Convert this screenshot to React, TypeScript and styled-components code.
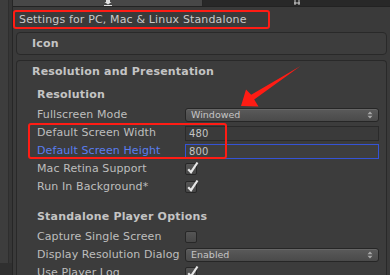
import React from 'react';
import styled, { createGlobalStyle, css } from 'styled-components';

const GlobalStyle = createGlobalStyle`
  html, body {
    margin: 0;
    padding: 0;
    background: #3a3a3a;
  }
  body {
    font-family: "DejaVu Sans", Verdana, sans-serif;
    overflow: hidden;
  }
`;

const Page = styled.div`
  position: relative;
  display: flex;
  width: 390px;
  height: 275px;
  overflow: hidden;
  background: #3a3a3a;
`;

const Rail = styled.div`
  flex: none;
  width: 12px;
  display: flex;
  flex-direction: column;
  border-right: 1px solid #262626;
`;

const RailBody = styled.div`
  height: 263px;
  display: flex;
`;

const RailLeft = styled.div`
  width: 8px;
  background: #3d3d3d;
  border-right: 1px solid #2e2e2e;
`;

const RailRight = styled.div`
  flex: 1;
  background: #363636;
`;

const RailFoot = styled.div`
  flex: 1;
  background: #303030;
`;

const Main = styled.div`
  flex: 1;
  display: flex;
  flex-direction: column;
  min-width: 0;
`;

const TabStrip = styled.div`
  flex: none;
  height: 6px;
  display: flex;
  border-bottom: 1px solid #222;
`;

const Tab = styled.div<{ $active?: boolean }>`
  display: flex;
  justify-content: center;
  align-items: flex-end;
  overflow: hidden;
  ${p => p.$active
    ? css`width: 189px; background: #474747; border-right: 1px solid #252525;`
    : css`flex: 1; background: #282828;`}
`;

const Title = styled.div`
  box-sizing: border-box;
  margin-top: 3px;
  width: 257px;
  height: 19px;
  border: 2px solid #ff1c14;
  border-radius: 3px;
  padding-left: 4px;
  font-size: 11px;
  letter-spacing: 0.15px;
  line-height: 15px;
  color: #c9c9c9;
  white-space: nowrap;
`;

const Foldout = styled.div`
  box-sizing: border-box;
  margin: 3px 3px 0 3px;
  height: 23px;
  border: 1px solid #292929;
  border-radius: 4px;
  background: #3d3d3d;
  padding-left: 15px;
  font-size: 11px;
  font-weight: bold;
  letter-spacing: 0.2px;
  line-height: 21px;
  color: #c4c4c4;
`;

const Section = styled.div`
  flex: 1;
  margin: 5px 3px 0 3px;
  border: 1px solid #292929;
  border-bottom: none;
  border-radius: 4px 4px 0 0;
  background: #3c3c3c;
`;

const SectionHeader = styled.div`
  height: 22px;
  padding-left: 15px;
  font-size: 11px;
  font-weight: bold;
  letter-spacing: 0.2px;
  line-height: 22px;
  color: #c4c4c4;
`;

const GroupHeader = styled.div<{ $gap?: number }>`
  height: 22px;
  margin-top: ${p => p.$gap ?? 1}px;
  padding-left: 20px;
  font-size: 11px;
  font-weight: bold;
  letter-spacing: 0.2px;
  line-height: 22px;
  color: #c4c4c4;
`;

const Row = styled.div`
  height: 18px;
  display: grid;
  grid-template-columns: 148px 1fr;
  align-items: center;
  padding: 0 7px 0 20px;
`;

const Label = styled.div<{ $focus?: boolean }>`
  font-size: 11px;
  line-height: 18px;
  white-space: nowrap;
  letter-spacing: 0.1px;
  color: ${p => (p.$focus ? '#5a7ef0' : '#bebebe')};
`;

const Dropdown = styled.div`
  box-sizing: border-box;
  height: 14px;
  display: flex;
  align-items: center;
  justify-content: space-between;
  padding: 0 5px 0 5px;
  border: 1px solid #262626;
  border-radius: 3px;
  background: linear-gradient(#5a5a5a, #4a4a4a);
  box-shadow: inset 0 1px 0 #666;
  font-size: 9.5px;
  line-height: 12px;
  color: #c6c6c6;
`;

const Field = styled.div<{ $focus?: boolean }>`
  box-sizing: border-box;
  height: 15px;
  padding-left: 3px;
  border: 1px solid ${p => (p.$focus ? '#3553d6' : '#2a2a2a')};
  background: ${p => (p.$focus ? '#3e3e3e' : '#3a3a3a')};
  font-size: 10px;
  letter-spacing: 0.2px;
  line-height: 13px;
  color: #c4c4c4;
`;

const Box = styled.div`
  position: relative;
  box-sizing: border-box;
  width: 12px;
  height: 12px;
  border: 1px solid #272727;
  border-radius: 2px;
  background: linear-gradient(#555, #474747);
`;

const Tick = styled.svg`
  position: absolute;
  left: 1px;
  top: -3px;
`;

const Highlight = styled.div`
  position: absolute;
  left: 28px;
  top: 123px;
  width: 199px;
  height: 36px;
  box-sizing: border-box;
  border: 2px solid #ff1c14;
  border-radius: 3px;
  pointer-events: none;
`;

const Overlay = styled.svg`
  position: absolute;
  left: 0;
  top: 0;
  pointer-events: none;
`;

const Arrows = () => (
  <svg width="6" height="8" viewBox="0 0 6 8">
    <path d="M3 0.5 L5.5 3.3 L0.5 3.3 Z M3 7.5 L5.5 4.7 L0.5 4.7 Z" fill="#a8a8a8" />
  </svg>
);

const Check = ({ on }: { on?: boolean }) => (
  <Box>
    {on && (
      <Tick width="12" height="14" viewBox="0 0 12 14">
        <path d="M1.2 8.2 L4 11.2 L10.5 1.5" fill="none" stroke="#e6e6e6" strokeWidth="2.2" />
      </Tick>
    )}
  </Box>
);

const Select = ({ value }: { value: string }) => (
  <Dropdown>
    <span>{value}</span>
    <Arrows />
  </Dropdown>
);

export default function App() {
  return (
    <Page>
      <GlobalStyle />
      <Rail>
        <RailBody>
          <RailLeft />
          <RailRight />
        </RailBody>
        <RailFoot />
      </Rail>
      <Main>
        <TabStrip>
          <Tab $active>
            <svg width="8" height="6" viewBox="0 0 8 6">
              <path d="M2 0 H6 V2 H7.5 L4 4.5 L0.5 2 H2 Z" fill="#e0e0e0" />
              <rect x="0" y="5" width="8" height="1" fill="#e0e0e0" />
            </svg>
          </Tab>
          <Tab>
            <svg width="6" height="6" viewBox="0 0 6 6">
              <path d="M1 0 V5 M5 0 V5 M0 3 H6" stroke="#d0d0d0" strokeWidth="1" />
            </svg>
          </Tab>
        </TabStrip>
        <Title>Settings for PC, Mac &amp; Linux Standalone</Title>
        <Foldout>Icon</Foldout>
        <Section>
          <SectionHeader>Resolution and Presentation</SectionHeader>
          <GroupHeader>Resolution</GroupHeader>
          <Row>
            <Label>Fullscreen Mode</Label>
            <Select value="Windowed" />
          </Row>
          <Row>
            <Label>Default Screen Width</Label>
            <Field>480</Field>
          </Row>
          <Row>
            <Label $focus>Default Screen Height</Label>
            <Field $focus>800</Field>
          </Row>
          <Row>
            <Label>Mac Retina Support</Label>
            <Check on />
          </Row>
          <Row>
            <Label>Run In Background*</Label>
            <Check on />
          </Row>
          <GroupHeader $gap={10}>Standalone Player Options</GroupHeader>
          <Row>
            <Label>Capture Single Screen</Label>
            <Check />
          </Row>
          <Row>
            <Label>Display Resolution Dialog</Label>
            <Select value="Enabled" />
          </Row>
          <Row>
            <Label>Use Player Log</Label>
            <Check on />
          </Row>
        </Section>
      </Main>
      <Highlight />
      <Overlay width="390" height="275" viewBox="0 0 390 275">
        <path d="M241 106 L246 89.5 L251.2 94.8 L300.5 66 L254.2 99.6 L258.5 106.5 Z" fill="#ff1c14" />
      </Overlay>
    </Page>
  );
}
